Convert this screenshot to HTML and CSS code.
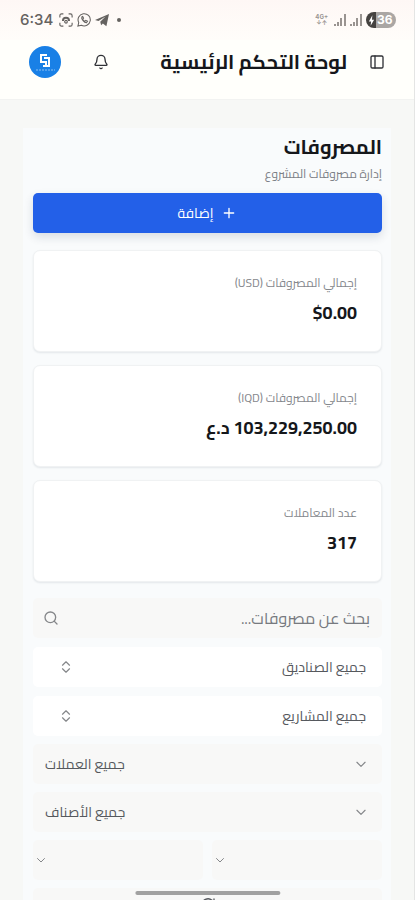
FILE: index.html
```html
<!DOCTYPE html>
<html lang="ar" dir="rtl">
<head>
<meta charset="utf-8">
<meta name="viewport" content="width=device-width, initial-scale=1">
<title>المصروفات</title>
<link rel="stylesheet" href="styles.css">
</head>
<body>
<div class="app">
  <div class="status" dir="ltr">
    <div class="status-group">
      <span class="clock">6:34</span>
      <svg class="status-icon" viewBox="0 0 16 16" fill="none" stroke="currentColor" stroke-width="1.3"><path d="M1 5V3q0-2 2-2h2M11 1h2q2 0 2 2v2M15 11v2q0 2-2 2h-2M5 15H3q-2 0-2-2v-2"/><path d="M4.500 9a3.500 3.500 0 0 1 7 0" stroke-width="2.200"/><circle cx="8" cy="10" r="1.500"/></svg>
      <svg class="status-icon" viewBox="0 0 16 16" fill="none" stroke="currentColor" stroke-width="1.200"><path d="M1 15l1-4a7 7 0 1 1 3 3z"/><path d="M5.500 4.500c-1 2 3 7 5.500 6.500l1-1.500-2-1-1 1C8 9 7 8 6.500 7l1-1-1-2z"/></svg>
      <svg class="status-icon" viewBox="0 0 16 16" fill="currentColor"><path d="M0 8L16 1l-3 14-4-3-2 2-1-4 6-6-8 5z"/></svg>
      <span class="status-dot"></span>
    </div>
    <div class="status-group">
      <span class="network"><span>4G+</span><span>↓↑</span></span>
      <svg class="signal" viewBox="0 0 12 12" fill="currentColor"><path d="M0 10h2v2H0zM3 8h2v4H3zM6 4h2v8H6zM10 0h2v12h-2z"/></svg>
      <svg class="signal" viewBox="0 0 12 12" fill="currentColor"><path d="M0 10h2v2H0zM3 8h2v4H3zM6 4h2v8H6zM10 0h2v12h-2z"/></svg>
      <span class="battery"><svg viewBox="0 0 8 12" fill="currentColor"><path d="M5 0L1 7h2.500L3 12l4-7H4.500z"/></svg><span>36</span></span>
    </div>
  </div>

  <header class="topbar">
    <button class="icon-button" aria-label="القائمة"><svg class="icon" viewBox="0 0 24 24"><rect x="3" y="3" width="18" height="18" rx="2"/><path d="M9 3v18"/></svg></button>
    <h1 class="topbar-title">لوحة التحكم الرئيسية</h1>
    <button class="icon-button bell" aria-label="الإشعارات"><svg class="icon" viewBox="0 0 24 24"><path d="M10.300 21a2 2 0 0 0 3.400 0"/><path d="M3.300 15.300A1 1 0 0 0 4 17h16a1 1 0 0 0 .7-1.700C19.400 14 18 12.500 18 8A6 6 0 0 0 6 8c0 4.500-1.400 6-2.700 7.300"/></svg></button>
    <button class="avatar" aria-label="الحساب"><svg viewBox="0 0 32 32" fill="none" stroke="currentColor"><path d="M18 9h-6v7h5v4h-3M15 12h5v8h-3" stroke-width="2"/><path d="M7 24h19" stroke-width="1" stroke-dasharray="2 1" opacity=".5"/></svg></button>
  </header>

  <main class="page">
    <div class="panel">
      <h2 class="heading">المصروفات</h2>
      <p class="subheading">إدارة مصروفات المشروع</p>
      <button class="add"><svg class="icon" viewBox="0 0 24 24"><path d="M5 12h14M12 5v14"/></svg><span>إضافة</span></button>

      <section class="cards">
        <article class="card"><h3 class="card-label">إجمالي المصروفات (USD)</h3><p class="card-value"><bdi dir="ltr">$0.00</bdi></p></article>
        <article class="card"><h3 class="card-label">إجمالي المصروفات (IQD)</h3><p class="card-value">103,229,250.00 د.ع</p></article>
        <article class="card"><h3 class="card-label">عدد المعاملات</h3><p class="card-value">317</p></article>
      </section>

      <form class="filters">
        <div class="group">
          <div class="field search">
            <input type="search" class="control" aria-label="بحث عن مصروفات" placeholder="بحث عن مصروفات...">
            <svg class="icon" viewBox="0 0 24 24"><circle cx="11" cy="11" r="8"/><path d="M21 21l-4.300-4.300"/></svg>
          </div>
          <div class="field combo">
            <select class="control" aria-label="الصناديق"><option>جميع الصناديق</option></select>
            <svg class="icon" viewBox="0 0 24 24"><path d="M6 9l6-6 6 6M6 15l6 6 6-6"/></svg>
          </div>
          <div class="field combo">
            <select class="control" aria-label="المشاريع"><option>جميع المشاريع</option></select>
            <svg class="icon" viewBox="0 0 24 24"><path d="M6 9l6-6 6 6M6 15l6 6 6-6"/></svg>
          </div>
        </div>
        <div class="field pick" dir="ltr">
          <select class="control" aria-label="العملات"><option>جميع العملات</option></select>
          <svg class="icon" viewBox="0 0 24 24"><path d="M5 9l7 7 7-7"/></svg>
        </div>
        <div class="field pick" dir="ltr">
          <select class="control" aria-label="الأصناف"><option>جميع الأصناف</option></select>
          <svg class="icon" viewBox="0 0 24 24"><path d="M5 9l7 7 7-7"/></svg>
        </div>
        <div class="pair">
          <div class="field small">
            <select class="control" aria-label="من تاريخ"><option></option></select>
            <svg class="icon" viewBox="0 0 24 24"><path d="M5 9l7 7 7-7"/></svg>
          </div>
          <div class="field small">
            <select class="control" aria-label="إلى تاريخ"><option></option></select>
            <svg class="icon" viewBox="0 0 24 24"><path d="M5 9l7 7 7-7"/></svg>
          </div>
        </div>
        <button type="button" class="refresh" aria-label="إعادة ضبط"><svg class="icon" viewBox="0 0 24 24"><path d="M3 12a9 9 0 0 1 15-7l3 3M21 3v5h-5M21 12a9 9 0 0 1-15 7l-3-3"/></svg></button>
      </form>
    </div>
  </main>
  <div class="home-bar"></div>
</div>
</body>
</html>
```

FILE: styles.css
```css
* { box-sizing: border-box; }

body {
  margin: 0;
  background: #f7f8f6;
  color: #15171b;
  font-family: Cairo, "Noto Sans", "DejaVu Sans", sans-serif;
}

h1, h2, h3, p { margin: 0; }

button, input, select {
  margin: 0;
  border: 0;
  font: inherit;
  color: inherit;
}

.app {
  height: 100vh;
  overflow: hidden;
  border-right: 1px solid #e4e5e4;
}

.icon {
  width: 16px;
  height: 16px;
  fill: none;
  stroke: currentColor;
  stroke-width: 2;
  stroke-linecap: round;
  stroke-linejoin: round;
}

.status {
  display: flex;
  justify-content: space-between;
  align-items: center;
  height: 40px;
  padding: 0 18px 0 20px;
  background: linear-gradient(#fef7f5, #fffdfa);
  color: #656260;
}

.status-group {
  display: flex;
  align-items: center;
  gap: 4px;
}

.clock {
  margin-right: 2px;
  font: 500 15px/20px Inter, sans-serif;
}

.status-icon { width: 14px; height: 14px; }

.status-dot {
  width: 4px;
  height: 4px;
  margin-left: 4px;
  border-radius: 50%;
  background: #656260;
}

.network {
  display: flex;
  flex-direction: column;
  align-items: center;
  margin-right: 2px;
  font: 700 6px/6px Inter, sans-serif;
  color: #999491;
}

.signal {
  width: 12px;
  height: 12px;
  color: #999491;
}

.battery {
  display: flex;
  align-items: center;
  gap: 2px;
  width: 30px;
  height: 16px;
  padding-left: 2px;
  border-radius: 8px;
  background: linear-gradient(90deg, #454240 10px, #aaa6a4 10px);
  color: #fff;
  font: 700 12px/16px Inter, sans-serif;
}

.battery svg { width: 7px; height: 11px; }

.topbar {
  display: flex;
  align-items: center;
  height: 59px;
  padding: 0 29px 16px;
  background: #fffffb;
}

.icon-button {
  display: flex;
  padding: 0;
  background: none;
  color: #303236;
}

.topbar-title {
  margin-right: 22px;
  font-size: 20px;
  line-height: 28px;
  font-weight: 700;
}

.bell { margin-right: auto; }

.avatar {
  display: flex;
  width: 32px;
  height: 32px;
  margin-right: 32px;
  padding: 0;
  border-radius: 50%;
  background: #1980e6;
  color: #fff;
}

.page {
  padding: 28px 23px 0;
  border-top: 1px solid #f2f3f1;
}

.panel {
  padding: 3px 9px 20px 10px;
  background: #f9fbfc;
}

.heading {
  font-size: 20px;
  line-height: 32px;
  font-weight: 700;
}

.subheading {
  font-size: 12px;
  line-height: 22px;
  color: #7c8086;
}

.add {
  display: flex;
  justify-content: center;
  align-items: center;
  gap: 8px;
  width: 100%;
  height: 40px;
  margin-top: 8px;
  border-radius: 5px;
  background: #2360e8;
  color: #fff;
  font-size: 14px;
  box-shadow: 0 4px 10px #1a2a4424;
}

.cards {
  display: grid;
  gap: 13px;
  margin-top: 17px;
}

.card {
  padding: 22px 24px 24px;
  border: 1px solid #f0f2f3;
  border-radius: 7px;
  background: #fff;
  box-shadow: 0 1px 2px #1a2a4418;
}

.card-label {
  font-size: 12px;
  line-height: 20px;
  font-weight: 400;
  color: #85888d;
}

.card-value {
  margin-top: 6px;
  font-size: 18px;
  line-height: 28px;
  font-weight: 700;
}

.filters {
  display: grid;
  gap: 8px;
  margin-top: 16px;
}

.group { display: grid; gap: 9px; }

.field {
  display: grid;
  align-items: center;
  height: 40px;
  border-radius: 5px;
  background: #f8f8f7;
  color: #55585d;
  font-size: 14px;
}

.field > * { grid-area: 1 / 1; }

.field .icon {
  justify-self: end;
  pointer-events: none;
  color: #85878a;
}

.control {
  width: 100%;
  min-width: 0;
  height: 40px;
  background: none;
  appearance: none;
  outline: 0;
}

.search .control { padding: 0 12px; font-size: 16px; }
.search .control::placeholder { color: #777a7f; opacity: 1; }
.search .icon { margin-left: 10px; }

.combo { background: #fff; }
.combo .control { padding: 0 16px; }
.combo .icon { width: 14px; height: 14px; margin-left: 26px; }

.pick .control { padding: 0 12px; }
.pick .icon { width: 14px; height: 14px; margin-right: 14px; }

.pair {
  display: grid;
  grid-template-columns: 1fr 1fr;
  gap: 9px;
}

.small .icon { width: 12px; height: 12px; margin-left: 2px; }

.refresh {
  display: flex;
  justify-content: center;
  height: 40px;
  padding: 9px 0 0;
  border-radius: 5px;
  background: #f8f8f7;
  color: #55585d;
}

.home-bar {
  position: fixed;
  bottom: 5px;
  left: 50%;
  width: 35%;
  height: 4px;
  border-radius: 2px;
  background: #a1a1a1;
  transform: translateX(-50%);
}
```
